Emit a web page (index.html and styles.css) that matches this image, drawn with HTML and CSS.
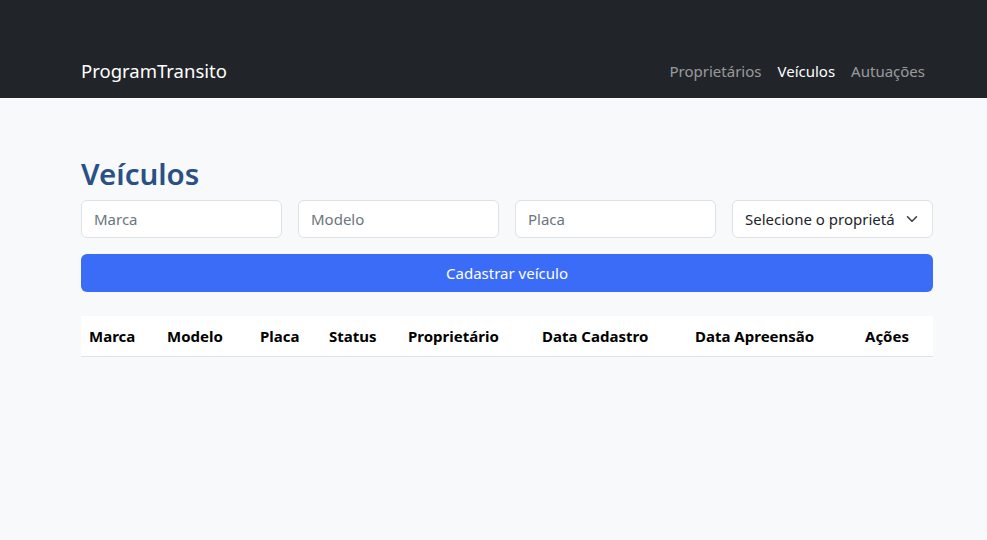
FILE: index.html
```html
<!DOCTYPE html>
<html lang="pt-BR">
<head>
<meta charset="utf-8">
<title>ProgramTransito</title>
<link rel="stylesheet" href="styles.css">
</head>
<body>
<nav class="navbar">
  <div class="nav-inner">
    <a class="brand" href="#">ProgramTransito</a>
    <ul class="nav-links">
      <li><a href="#" class="nav-link">Proprietários</a></li>
      <li><a href="#" class="nav-link active">Veículos</a></li>
      <li><a href="#" class="nav-link">Autuações</a></li>
    </ul>
  </div>
</nav>
<main class="container">
  <h1 class="title">Veículos</h1>
  <form class="form-row">
    <input class="field" type="text" placeholder="Marca">
    <input class="field" type="text" placeholder="Modelo">
    <input class="field" type="text" placeholder="Placa">
    <div class="select">
      <span class="select-text">Selecione o proprietá</span>
      <svg class="chev" width="12" height="12" viewBox="0 0 16 16"><path d="M2 5l6 6 6-6" fill="none" stroke="#343a40" stroke-width="2" stroke-linecap="round" stroke-linejoin="round"/></svg>
    </div>
  </form>
  <button class="btn" type="button">Cadastrar veículo</button>
  <table class="table">
    <colgroup>
      <col class="c1"><col class="c2"><col class="c3"><col class="c4"><col class="c5"><col class="c6"><col class="c7"><col class="c8">
    </colgroup>
    <thead>
      <tr>
        <th>Marca</th><th>Modelo</th><th>Placa</th><th>Status</th><th>Proprietário</th><th>Data Cadastro</th><th>Data Apreensão</th><th>Ações</th>
      </tr>
    </thead>
    <tbody></tbody>
  </table>
</main>
</body>
</html>
```
FILE: styles.css
```css
* { box-sizing: border-box; }
html, body { margin: 0; padding: 0; }
body {
  background: #f8f9fa;
  font-family: "Noto Sans", "Open Sans", sans-serif;
  font-size: 15px;
  color: #212529;
}
.navbar {
  background: #212529;
  height: 98px;
  padding-top: 51px;
}
.nav-inner {
  margin: 0 54px 0 81px;
  display: flex;
  align-items: center;
  justify-content: space-between;
}
.brand {
  color: #fff;
  text-decoration: none;
  font-size: 18.5px;
  line-height: 30px;
}
.nav-links {
  list-style: none;
  margin: 0;
  padding: 0;
  display: flex;
}
.nav-link {
  display: block;
  padding: 8px;
  color: rgba(255,255,255,.55);
  text-decoration: none;
  line-height: 24px;
}
.nav-link.active { color: #fff; }
.container {
  margin: 0 54px 0 81px;
  padding-top: 57px;
}
.title {
  margin: 0 0 7px;
  font-size: 29.5px;
  line-height: 38px;
  font-weight: 600;
  color: #2a5186;
}
.form-row {
  display: grid;
  grid-template-columns: repeat(4, minmax(0, 1fr));
  gap: 16px;
  margin: 0;
}
.field, .select {
  width: 100%;
  min-width: 0;
  height: 38px;
  border: 1px solid #dee2e6;
  border-radius: 6px;
  background: #fff;
  padding: 0 12px;
  font-family: inherit;
  font-size: 15px;
  color: #212529;
}
.field::placeholder { color: #6c757d; }
.select {
  display: flex;
  align-items: center;
  justify-content: space-between;
  padding-right: 14px;
}
.select-text { white-space: nowrap; overflow: hidden; }
.chev { flex: none; margin-left: 8px; }
.btn {
  display: block;
  width: 100%;
  height: 38px;
  margin-top: 16px;
  border: none;
  border-radius: 6px;
  background: #3b6cf8;
  color: #fff;
  font-family: inherit;
  font-size: 15px;
}
.table {
  width: 100%;
  margin-top: 24px;
  border-collapse: collapse;
  table-layout: fixed;
  background: #fff;
}
.table th {
  text-align: left;
  font-weight: 700;
  color: #000;
  padding: 8px;
  height: 40px;
  border-bottom: 1px solid #dee2e6;
  white-space: nowrap;
}
.c1 { width: 78px; }
.c2 { width: 93px; }
.c3 { width: 69px; }
.c4 { width: 79px; }
.c5 { width: 134px; }
.c6 { width: 153px; }
.c7 { width: 170px; }
.c8 { width: 76px; }
```
